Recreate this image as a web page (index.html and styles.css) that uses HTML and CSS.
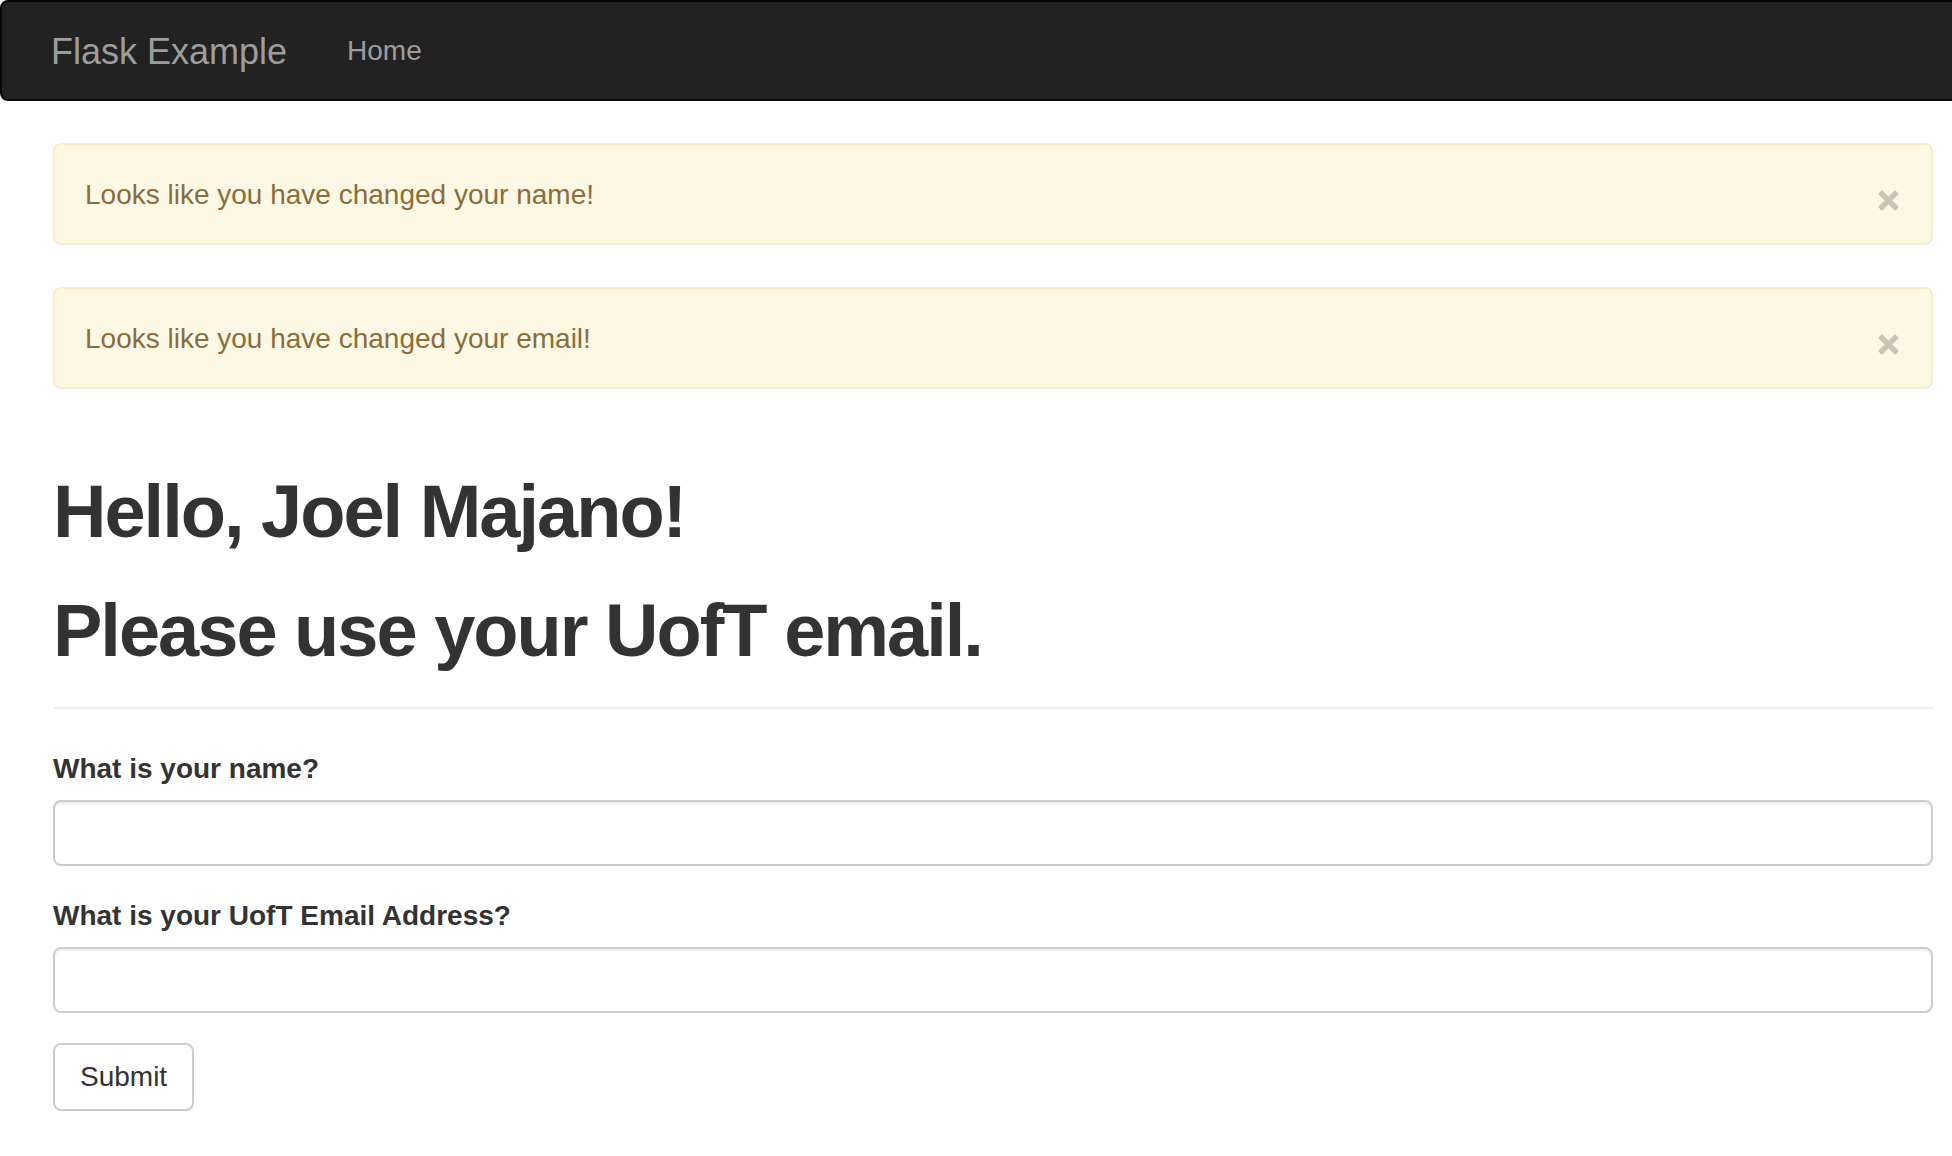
FILE: index.html
```html
<!DOCTYPE html>
<html lang="en">
<head>
<meta charset="utf-8">
<title>Flask Example</title>
<link rel="stylesheet" href="styles.css">
</head>
<body>
<nav class="navbar">
  <a class="brand" href="#">Flask Example</a>
  <a class="nav-link" href="#">Home</a>
</nav>
<main class="container">
  <div class="alert">
    <span class="alert-text">Looks like you have changed your name!</span>
    <button class="close" type="button" aria-label="Close"><svg width="21" height="21" viewBox="0 0 21 21"><path d="M2 2 L19 19 M19 2 L2 19" stroke="currentColor" stroke-width="5.5"/></svg></button>
  </div>
  <div class="alert">
    <span class="alert-text">Looks like you have changed your email!</span>
    <button class="close" type="button" aria-label="Close"><svg width="21" height="21" viewBox="0 0 21 21"><path d="M2 2 L19 19 M19 2 L2 19" stroke="currentColor" stroke-width="5.5"/></svg></button>
  </div>
  <div class="page-header">
    <h1>Hello, Joel Majano!</h1>
    <h1>Please use your UofT email.</h1>
  </div>
  <form class="form">
    <div class="form-group">
      <label class="label" for="name">What is your name?</label>
      <input class="input" id="name" type="text">
    </div>
    <div class="form-group">
      <label class="label" for="email">What is your UofT Email Address?</label>
      <input class="input" id="email" type="text">
    </div>
    <button class="btn" type="button">Submit</button>
  </form>
</main>
</body>
</html>
```
FILE: styles.css
```css
html, body {
  margin: 0;
  padding: 0;
  overflow: hidden;
  background: #fff;
}
body {
  font-family: "Liberation Sans", Arial, sans-serif;
  font-size: 28px;
  line-height: 40px;
  color: #333;
}
.navbar {
  display: flex;
  align-items: center;
  height: 97px;
  margin-right: -30px;
  margin-bottom: 42px;
  padding-left: 49px;
  background: #222;
  border: 2px solid #080808;
  border-radius: 8px;
}
.brand {
  font-size: 36px;
  line-height: 40px;
  color: #9d9d9d;
  text-decoration: none;
  margin-top: 2px;
}
.nav-link {
  margin-left: 60px;
  font-size: 28px;
  line-height: 40px;
  color: #9d9d9d;
  text-decoration: none;
}
.container {
  padding: 0 19px 0 53px;
}
.alert {
  display: flex;
  justify-content: space-between;
  align-items: center;
  height: 40px;
  padding: 29px 32px 29px 30px;
  margin-bottom: 42px;
  background: #fcf8e3;
  border: 2px solid #faebcc;
  border-radius: 8px;
  color: #8a6d3b;
}
.alert-text {
  margin-top: 1px;
}
.close {
  display: block;
  margin: 12px 0 0 0;
  padding: 0;
  border: 0;
  background: transparent;
  color: #cac6b5;
  width: 21px;
  height: 21px;
}
.close svg {
  display: block;
}
.page-header {
  margin-top: 83px;
  padding-bottom: 17px;
  border-bottom: 2px solid #eee;
  margin-bottom: 40px;
}
h1 {
  font-size: 74px;
  line-height: 79px;
  font-weight: bold;
  letter-spacing: -2px;
  margin: 40px 0 20px;
  color: #333;
}
.page-header h1:first-child {
  margin-top: 0;
}
.form-group {
  margin-bottom: 30px;
}
.label {
  display: block;
  font-weight: bold;
  margin-bottom: 11px;
}
.input {
  display: block;
  box-sizing: border-box;
  width: 100%;
  height: 66px;
  border: 2px solid #ccc;
  border-radius: 8px;
  box-shadow: inset 0 2px 2px rgba(0, 0, 0, 0.075);
  background: #fff;
  margin: 0;
}
.btn {
  display: block;
  box-sizing: border-box;
  height: 68px;
  padding: 12px 25px;
  font-family: "Liberation Sans", Arial, sans-serif;
  font-size: 28px;
  line-height: 40px;
  color: #333;
  background: #fff;
  border: 2px solid #ccc;
  border-radius: 8px;
}
```
